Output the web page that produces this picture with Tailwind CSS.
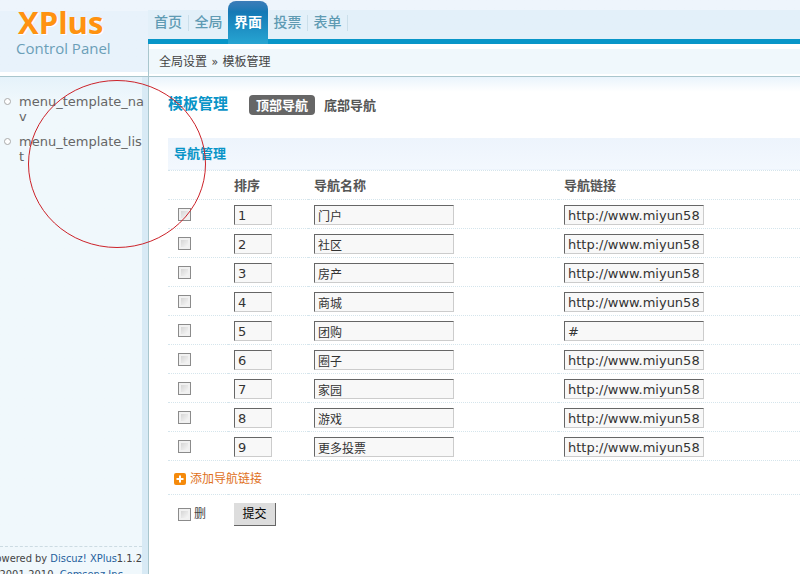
<!DOCTYPE html>
<html lang="zh-CN">
<head>
    <meta charset="UTF-8">
    <meta name="viewport" content="width=device-width, initial-scale=1.0">
    <title>XPlus Control Panel</title>
    <script src="https://cdn.jsdelivr.net/npm/@tailwindcss/browser@4"></script>
</head>

<body class="relative flex h-screen overflow-hidden bg-white font-['DejaVu_Sans_Condensed','Noto_Sans_CJK_SC',sans-serif] text-xs text-[#444]">

    <!-- Sidebar -->
    <aside class="flex w-[148px] shrink-0 flex-col">
        <div class="h-[77px] shrink-0 border-b border-[#a9c6cd] bg-linear-to-b from-[#eef5fc] from-15% to-[#e8f2fb] to-15%">
            <div class="h-[76px] border-b-4 border-white pt-1 pl-4 font-['Open_Sans',sans-serif]">
                <div class="pl-[2px] text-[31px] leading-9 font-bold text-[#ff9210] [text-shadow:1px_1px_0_#fff]">XPlus</div>
                <div class="text-[15px] leading-4 text-[#6b9fb8]">Control Panel</div>
            </div>
        </div>

        <div class="flex min-h-0 flex-1 flex-col border-r-[6px] border-[#d8eaf5] bg-linear-to-b from-[#e5f2fa] to-[#f0f8fc] to-5%">
            <ul class="space-y-2.5 pt-[17px] pl-1 font-['DejaVu_Sans',sans-serif] text-[13px] leading-[15px] text-[#666]">
                <li class="flex gap-2">
                    <span class="mt-1 size-[7px] shrink-0 rounded-full border border-[#aaa] bg-white"></span>
                    <a href="#" class="min-w-0">menu_template_na<br>v</a>
                </li>
                <li class="flex gap-2">
                    <span class="mt-1 size-[7px] shrink-0 rounded-full border border-[#aaa] bg-white"></span>
                    <a href="#" class="min-w-0">menu_template_lis<br>t</a>
                </li>
            </ul>
            <div class="mt-auto flex h-7 flex-col items-end overflow-hidden border-t border-dashed border-[#ccdbe2] pt-1 text-[11px] leading-4 whitespace-nowrap">
                <p>Powered by <a href="#" class="text-[#1f5f9c]">Discuz! XPlus</a>1.1.2</p>
                <p class="pr-4">© 2001-2010, <a href="#" class="text-[#1f5f9c]">Comsenz Inc.</a></p>
            </div>
        </div>
    </aside>

    <div class="flex min-w-0 flex-1 flex-col">
        <!-- Top navigation -->
        <nav class="flex h-11 shrink-0 border-b-[5px] border-[#0896c8] bg-linear-to-b from-[#eef5fc] from-25% to-[#e3f0f9] to-25% text-sm leading-[45px] font-medium text-[#5f9bb3]">
            <a href="#" class="w-10 text-center">首页</a>
            <span class="mt-[15px] h-4 w-px bg-[#cbdfea]"></span>
            <a href="#" class="w-[39px] text-center">全局</a>
            <a href="#" class="mt-px h-[43px] w-10 rounded-t-lg bg-linear-to-b from-[#3b7cb8] via-[#1579b5] via-25% to-[#27a5d2] text-center leading-[43px] font-bold text-white">界面</a>
            <a href="#" class="w-[39px] text-center">投票</a>
            <span class="mt-[15px] h-4 w-px bg-[#cbdfea]"></span>
            <a href="#" class="w-[39px] text-center">表单</a>
            <span class="mt-[15px] h-4 w-px bg-[#cbdfea]"></span>
        </nav>

        <!-- Breadcrumb -->
        <div class="shrink-0 border-b border-l border-[#a9c6cd] bg-white pt-[5px] pb-[2px]">
            <div class="h-[25px] bg-[#f0f8fc] pl-2.5 leading-[27px]">全局设置 <span class="px-px">»</span> 模板管理</div>
        </div>

        <main class="flex-1 border-l border-[#a9c6cd] bg-linear-to-b from-[#eaf4fc] to-white to-3% pt-[17px] pl-[19px]">
            <div class="flex h-[22px] items-center">
                <h3 class="w-[81px] text-[15px] font-bold text-[#0994c7]">模板管理</h3>
                <a href="#" class="h-5 w-[66px] rounded bg-[#666] text-center text-[13px] leading-[21px] font-bold text-white">顶部导航</a>
                <a href="#" class="ml-[9px] text-[13px] leading-[21px] font-bold text-[#555]">底部导航</a>
            </div>

            <form class="mt-[22px]">
                <table class="w-full table-fixed">
                    <colgroup>
                        <col class="w-[60px]">
                        <col class="w-20">
                        <col class="w-[250px]">
                        <col>
                    </colgroup>
                    <thead class="text-left text-[#555]">
                        <tr class="h-8 border-b border-dotted border-[#d5e5ec] bg-linear-to-b from-[#edf4fc] to-[#f3f8fe]">
                            <th colspan="4" class="pl-1.5 text-[13px] font-bold text-[#0994c7]">导航管理</th>
                        </tr>
                        <tr class="h-[29px] border-b border-dotted border-[#d5e5ec] text-[13px]">
                            <th></th>
                            <th class="pt-0.5 pl-1.5">排序</th>
                            <th class="pt-0.5 pl-1.5">导航名称</th>
                            <th class="pt-0.5 pl-1.5">导航链接</th>
                        </tr>
                    </thead>
                    <tbody id="navRows"></tbody>
                    <tfoot>
                        <tr class="h-[34px] border-b border-dotted border-[#d5e5ec]">
                            <td colspan="4" class="pt-1 pl-1.5">
                                <a href="#" class="flex items-center gap-1 text-[#e0701a]">
                                    <svg class="size-3" viewBox="0 0 12 12">
                                        <rect width="12" height="12" rx="2" fill="#f58a0b"/>
                                        <path d="M5 2.5h2V5h2.5v2H7v2.5H5V7H2.5V5H5z" fill="#fff"/>
                                    </svg>
                                    添加导航链接
                                </a>
                            </td>
                        </tr>
                        <tr class="h-10">
                            <td class="pl-2.5">
                                <label class="flex items-center gap-[3px]">
                                    <input type="checkbox" class="size-[13px] appearance-none border border-[#8b8b8b] bg-linear-to-br from-[#cdcdcd] to-white shadow-[inset_0_0_0_2px_#f1f1f1]">
                                    删
                                </label>
                            </td>
                            <td colspan="3" class="pl-1.5">
                                <button type="submit" class="block h-[23px] w-[42px] border-r border-b border-[#666] bg-[#ddd] text-black">提交</button>
                            </td>
                        </tr>
                    </tfoot>
                </table>
            </form>
        </main>
    </div>

    <!-- Red marker ring -->
    <svg class="pointer-events-none absolute top-20 left-7 h-[168px] w-[178px]" viewBox="0 0 178 168" fill="none">
        <ellipse cx="89" cy="84" rx="88.5" ry="83.5" stroke="#cc2229"/>
    </svg>

    <script>
        const url = 'http://www.miyun58';
        const items = [
            ['门户', url], ['社区', url], ['房产', url],
            ['商城', url], ['团购', '#'], ['圈子', url],
            ['家园', url], ['游戏', url], ['更多投票', url]
        ];
        const field = "block h-5 border border-t-[#666] border-l-[#666] border-r-[#ccc] border-b-[#ccc] bg-[#f8f8f8] pt-px pl-[3px] text-[#333] font-['DejaVu_Sans','Noto_Sans_CJK_SC',sans-serif]";

        document.getElementById('navRows').innerHTML = items.map(([name, link], i) => `
            <tr class="h-[29px] border-b border-dotted border-[#d5e5ec]">
                <td class="pt-0.5 pl-2.5">
                    <input type="checkbox" aria-label="选择 ${name}" class="block size-[13px] appearance-none border border-[#8b8b8b] bg-linear-to-br from-[#cdcdcd] to-white shadow-[inset_0_0_0_2px_#f1f1f1]">
                </td>
                <td class="pt-0.5 pl-1.5"><input type="text" aria-label="排序" value="${i + 1}" class="${field} w-[38px] text-[13px]"></td>
                <td class="pt-0.5 pl-1.5"><input type="text" aria-label="导航名称" value="${name}" class="${field} w-[140px] text-xs"></td>
                <td class="pt-0.5 pl-1.5"><input type="text" aria-label="导航链接" value="${link}" class="${field} w-[140px] text-[13px]"></td>
            </tr>`).join('');
    </script>
</body>
</html>
